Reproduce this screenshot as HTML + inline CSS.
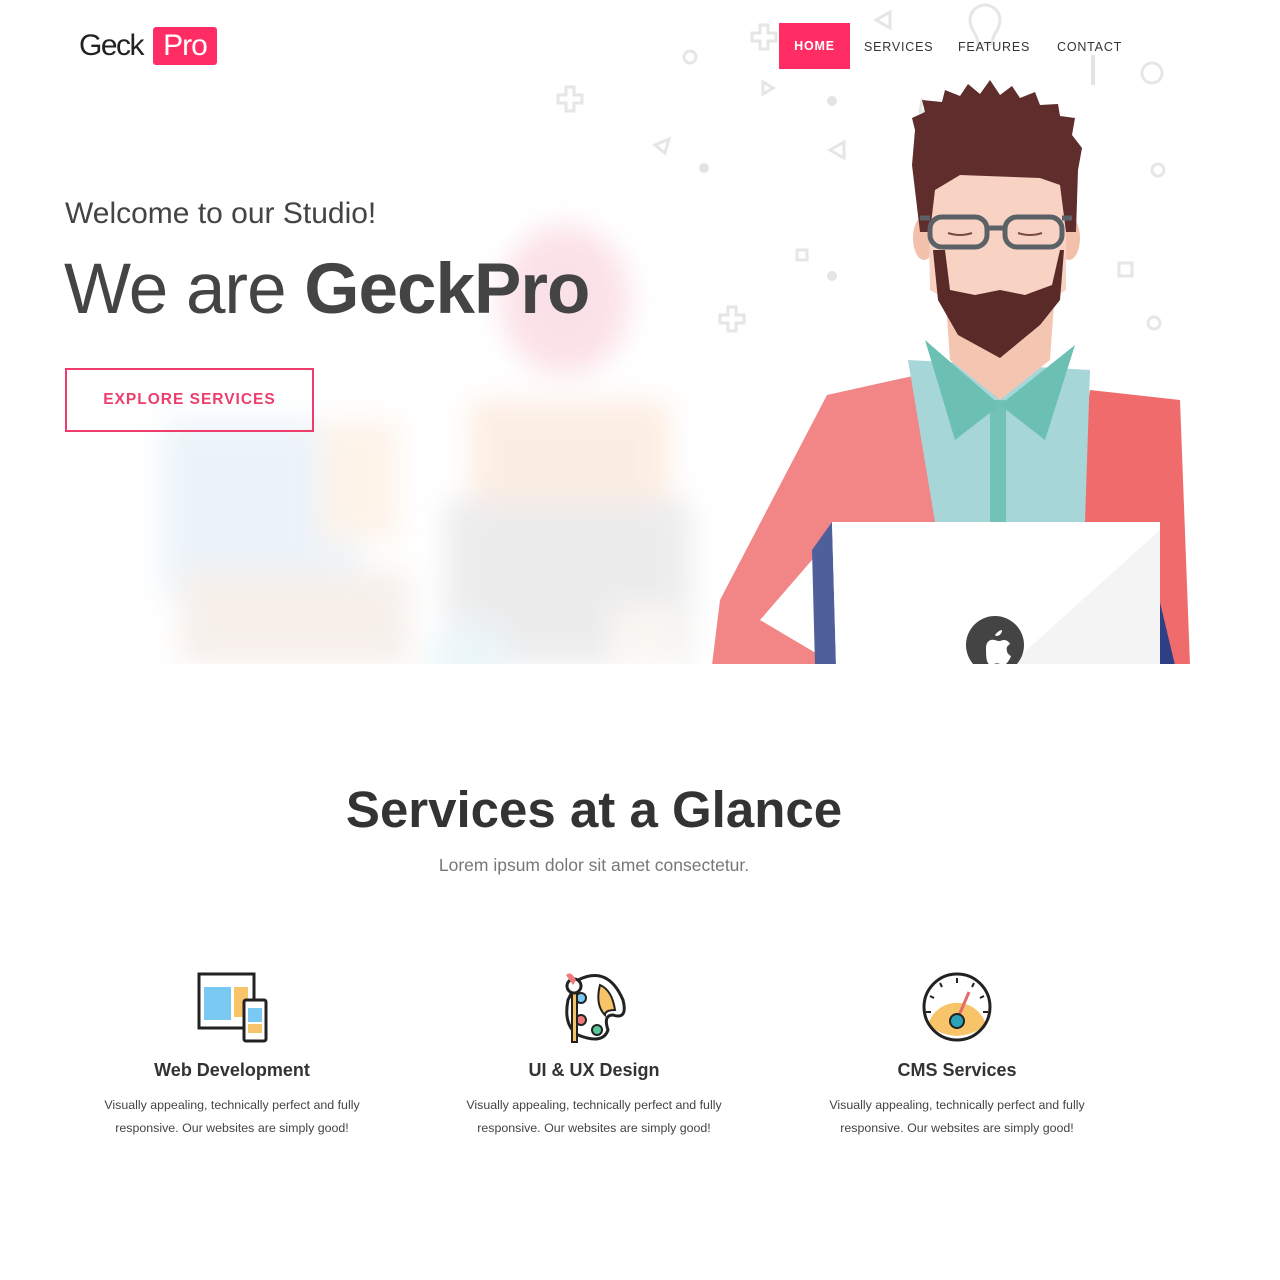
<!DOCTYPE html>
<html><head><meta charset="utf-8">
<style>
*{margin:0;padding:0;box-sizing:border-box}
body{width:1280px;height:1280px;background:#fff;font-family:"Liberation Sans",sans-serif;position:relative;overflow:hidden}
.abs{position:absolute}
.nav a{position:absolute;top:24px;height:46px;line-height:46px;font-size:12.5px;letter-spacing:0.8px;color:#333;text-decoration:none}
.col{position:absolute;top:1060px;width:300px;text-align:center}
.col h3{font-size:18px;color:#333;font-weight:bold;margin-bottom:13px}
.col p{font-size:12.4px;color:#444;line-height:23px}
</style></head><body>
<svg class="abs" style="left:0;top:0" width="1280" height="680" viewBox="0 0 1280 680">
<defs>
<filter id="b" x="-50%" y="-50%" width="200%" height="200%"><feGaussianBlur stdDeviation="14"/></filter>
<linearGradient id="fade" x1="0" x2="1"><stop offset="0" stop-color="#fff" stop-opacity="1"/><stop offset="0.15" stop-color="#fff" stop-opacity="0"/></linearGradient>
</defs>
<g filter="url(#b)" opacity="0.4">
<ellipse cx="565" cy="300" rx="65" ry="75" fill="#f5b5c5"/>
<rect x="470" y="400" width="200" height="120" fill="#f9d4b8"/>
<rect x="445" y="500" width="245" height="165" fill="#d0d0d2"/>
<rect x="160" y="420" width="200" height="180" fill="#cfe3f2"/>
<rect x="180" y="570" width="230" height="95" fill="#ead9cc"/>
<rect x="320" y="420" width="80" height="120" fill="#fbe3c9"/>
<rect x="610" y="605" width="70" height="60" fill="#f0eadf"/>
<circle cx="470" cy="660" r="40" fill="#cfe9f1"/>
</g>
<g fill="none" stroke="#e6e6e6" stroke-width="3">
<circle cx="690" cy="57" r="6"/><circle cx="1152" cy="73" r="10"/><circle cx="1158" cy="170" r="6"/><circle cx="1154" cy="323" r="6"/>
<path d="M876 20l14-8v16z"/><path d="M830 150l14-8v16z"/><path d="M922 100l12 8-14 4z"/><path d="M655 145l14-6-4 14z"/><path d="M763 82l10 6-10 6z"/>
<rect x="1119" y="263" width="13" height="13"/><rect x="797" y="250" width="10" height="10"/>
<path d="M970 20a15 15 0 1 1 30 0c0 10-8 14-8 24h-14c0-10-8-14-8-24z"/>
<path d="M720 315h8v-8h8v8h8v8h-8v8h-8v-8h-8z"/><path d="M752 33h8v-8h8v8h8v8h-8v8h-8v-8h-8z"/><path d="M558 95h8v-8h8v8h8v8h-8v8h-8v-8h-8z"/>
</g>
<g fill="#e4e4e4"><circle cx="832" cy="101" r="5"/><circle cx="832" cy="276" r="5"/><circle cx="704" cy="168" r="5"/><rect x="1091" y="55" width="4" height="30"/></g>
<polygon points="827,395 940,370 940,522 832,522 812,560 760,620 836,665 712,665 720,600" fill="#f28585"/>
<polygon points="1090,390 1180,400 1190,665 1160,665 1160,522 1070,522" fill="#f06b6b"/>
<polygon points="908,360 1090,370 1085,522 935,522" fill="#a7d6d8"/>
<rect x="990" y="400" width="16" height="122" fill="#72c2b5"/>
<polygon points="925,340 1000,405 955,440" fill="#6cc0b3"/>
<polygon points="1075,345 1000,405 1045,440" fill="#6cc0b3"/>
<polygon points="945,290 1055,290 1050,360 1000,400 950,360" fill="#f4c6b2"/>
<ellipse cx="924" cy="238" rx="11" ry="22" fill="#f2c0ab"/><ellipse cx="1069" cy="238" rx="11" ry="22" fill="#f2c0ab"/>
<polygon points="928,175 1066,175 1066,290 1000,330 930,290" fill="#f8d2c2"/>
<polygon points="933,250 945,250 950,290 975,295 1000,290 1025,295 1052,285 1060,250 1064,250 1060,300 1040,325 1000,358 958,335 938,300" fill="#5a2a28"/>
<polygon points="970,300 1030,300 1025,310 975,310" fill="#5a2a28"/>
<polygon points="915,130 912,118 925,112 922,100 942,102 945,90 960,96 968,84 980,94 990,80 1000,95 1012,86 1020,98 1035,92 1040,105 1058,104 1060,116 1075,118 1072,135 1082,148 1078,170 1076,232 1066,232 1060,185 1040,178 960,175 935,190 930,232 920,232 912,165" fill="#5e2d2c"/>
<g fill="none" stroke="#5b6166" stroke-width="5"><rect x="930" y="217" width="57" height="30" rx="12"/><rect x="1005" y="217" width="57" height="30" rx="12"/><path d="M987 228h18M920 218h10M1062 218h10"/></g>
<path d="M948 233q12 4 24 0M1018 233q12 4 24 0" stroke="#7a4a44" stroke-width="2" fill="none"/>
<polygon points="812,550 832,522 836,665 815,665" fill="#4e5f9c"/>
<polygon points="1157,590 1175,665 1155,665" fill="#2e3f86"/>
<polygon points="832,522 1160,522 1160,665 836,665" fill="#fff"/>
<polygon points="1160,530 1160,665 1010,665" fill="#f4f4f4"/>
<circle cx="995" cy="645" r="29" fill="#444"/>
<path d="M995 635c3-4 6-5 7-5c0 3-2 6-6 6zM986 648c0-6 4-9 8-8c2 0 3 1 5 1c2 0 3-1 5-1c3 0 5 2 6 4c-3 2-4 4-3 7c0 2 2 4 4 5c-1 3-3 6-5 8c-2 2-4 1-6 0c-2-1-4-1-6 0c-2 1-4 2-6-1c-2-3-2-10-2-15z" fill="#fff"/>
<rect x="0" y="0" width="1280" height="680" fill="url(#fade)"/>
<rect x="0" y="664" width="1280" height="20" fill="#fff"/>
</svg>

<div class="abs" style="left:79px;top:29px;font-size:30px;color:#222;letter-spacing:-1.5px">Geck</div>
<div class="abs" style="left:153px;top:27px;width:64px;height:38px;background:#ff2d63;border-radius:3px;color:#fff;font-size:30px;line-height:38px;text-align:center;letter-spacing:-1px">Pro</div>
<div class="nav">
<a style="left:779px;width:71px;top:23px;background:#ff2d63;color:#fff;text-align:center;font-weight:bold">HOME</a>
<a style="left:864px">SERVICES</a>
<a style="left:958px">FEATURES</a>
<a style="left:1057px">CONTACT</a>
</div>
<div class="abs" style="left:65px;top:197px;font-size:30px;color:#444">Welcome to our Studio!</div>
<div class="abs" style="left:64px;top:249px;font-size:71px;color:#444;letter-spacing:-1px">We are <b>GeckPro</b></div>
<div class="abs" style="left:65px;top:368px;width:249px;height:64px;border:2px solid #ee3d6c;color:#ee3d6c;font-size:15.5px;font-weight:bold;letter-spacing:1px;text-align:center;line-height:60px">EXPLORE SERVICES</div>

<div class="abs" style="left:0;width:1188px;top:780px;text-align:center;font-size:51px;font-weight:bold;color:#333">Services at a Glance</div>
<div class="abs" style="left:0;width:1188px;top:855px;text-align:center;font-size:17.5px;color:#777">Lorem ipsum dolor sit amet consectetur.</div>

<svg class="abs" style="left:0;top:960px" width="1280" height="95">
<g stroke="#222" stroke-width="3">
<rect x="199" y="14" width="55" height="54" fill="#fff"/><rect x="204" y="27" width="27" height="33" fill="#79c9f2" stroke="none"/><rect x="234" y="27" width="14" height="30" fill="#f7c46a" stroke="none"/>
<rect x="244" y="40" width="22" height="41" rx="2" fill="#fff"/><rect x="248" y="48" width="14" height="14" fill="#79c9f2" stroke="none"/><rect x="248" y="64" width="14" height="9" fill="#f7c46a" stroke="none"/>
<path d="M578 20q30-15 45 20q5 20-10 15q-10 0-5 15q-5 15-30 5q-15-10-10-35z" fill="#fff"/>
<path d="M600 25q12 5 15 25q-10 0-10 5q-10-10-5-30z" fill="#f7c46a" stroke-width="2"/>
<circle cx="581" cy="38" r="5" fill="#79c9f2" stroke-width="2"/><circle cx="581" cy="60" r="5" fill="#f07a7a" stroke-width="2"/><circle cx="597" cy="70" r="5" fill="#58c79a" stroke-width="2"/>
<rect x="572" y="30" width="5" height="52" fill="#f7c46a" stroke-width="2"/><circle cx="574" cy="26" r="7" fill="#fff"/>
<path d="M929 62a30 30 0 0 1 56 0q-5 12-28 14q-23-2-28-14z" fill="#f7c46a" stroke="none"/>
<circle cx="957" cy="47" r="33" fill="none"/>
<path d="M957 60l12-28" stroke="#e36b6b"/><circle cx="957" cy="61" r="7" fill="#2aa2b8" stroke-width="2"/>
</g>
<g stroke="#222" stroke-width="2"><path d="M957 18v5M940 23l2 4M974 23l-2 4M930 36l4 2M984 36l-4 2M926 52h5M988 52h-5"/></g>
<path d="M566 15q5-5 10 5l-3 5z" fill="#f07a7a"/>
</svg>

<div class="col" style="left:82px"><h3>Web Development</h3><p>Visually appealing, technically perfect and fully<br>responsive. Our websites are simply good!</p></div>
<div class="col" style="left:444px"><h3>UI &amp; UX Design</h3><p>Visually appealing, technically perfect and fully<br>responsive. Our websites are simply good!</p></div>
<div class="col" style="left:807px"><h3>CMS Services</h3><p>Visually appealing, technically perfect and fully<br>responsive. Our websites are simply good!</p></div>
</body></html>
